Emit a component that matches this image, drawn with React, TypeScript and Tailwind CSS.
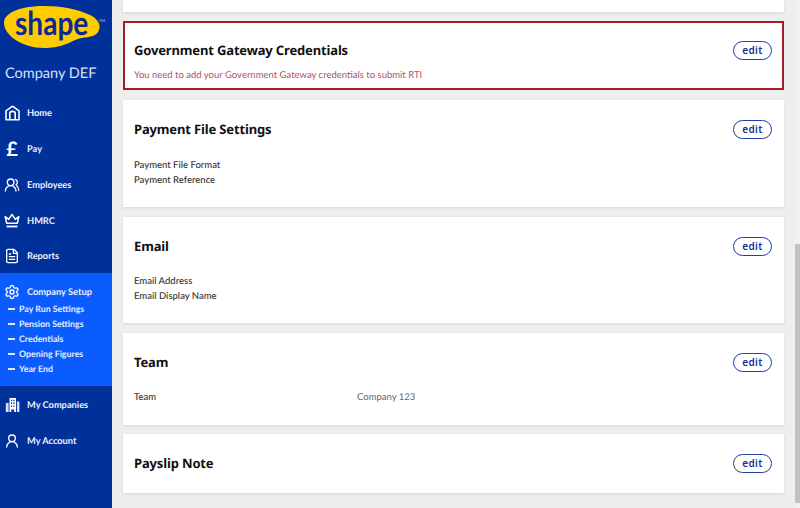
import { FileText, Settings, UserRound, UsersRound } from 'lucide-react'
import type { ReactNode } from 'react'

const heading = "font-['Noto_Sans',sans-serif] font-bold text-[13px] tracking-[-0.15px] text-[#111]"
const bodyText = 'text-[9.5px] leading-[15px]'

function Logo() {
  return (
    <svg width="106" height="50" viewBox="0 0 106 50" className="block">
      <path
        d="M4 23C4 12 22 6 44 6C62 6 77 9 90 15C98 19 101 25 99 30C97 36 90 37 82 38C73 39 66 48 44 48C22 48 4 35 4 23Z"
        fill="#ffcc00"
      />
      <text transform="translate(15 35) scale(0.85 1)" fontFamily="Lato, sans-serif" fontSize="33" fontWeight="700" fill="#0b2a94">
        shape
      </text>
      <text x="99" y="22" fontFamily="Lato, sans-serif" fontSize="4" fill="#c9d2f0">
        TM
      </text>
    </svg>
  )
}

function HomeIcon() {
  return (
    <svg width="15" height="16" viewBox="0 0 15 16" fill="none" stroke="white" strokeWidth="1.6">
      <path d="M1 14.7V5.8L7.5 1.2L14 5.8V14.7Z" strokeLinejoin="round" />
      <path d="M4.8 14.7V8.6C4.8 5.6 10.2 5.6 10.2 8.6V14.7" />
    </svg>
  )
}

function CrownIcon() {
  return (
    <svg width="16" height="15" viewBox="0 0 16 15" fill="none" stroke="white" strokeWidth="1.5" strokeLinejoin="round">
      <path d="M1.2 3.5L4.6 6.4L8 1.5L11.4 6.4L14.8 3.5L13.4 10.2H2.6Z" />
      <path d="M2.6 13.5H13.4" strokeWidth="1.8" />
    </svg>
  )
}

function BuildingsIcon() {
  return (
    <svg width="15" height="16" viewBox="0 0 15 16" fill="white">
      <path d="M4.5 1H11V15H9.2V12.5H6.3V15H4.5ZM6 2.8V4.2H7.2V2.8ZM8.3 2.8V4.2H9.5V2.8ZM6 5.6V7H7.2V5.6ZM8.3 5.6V7H9.5V5.6ZM6 8.4V9.8H7.2V8.4ZM8.3 8.4V9.8H9.5V8.4Z" fillRule="evenodd" />
      <path d="M0.8 6H3.6V15H0.8ZM11.9 4.5H14.4V15H11.9Z" opacity="0.85" />
    </svg>
  )
}

function NavItem({ icon, label }: { icon: ReactNode; label: string }) {
  return (
    <div className="flex h-[35.75px] items-center pl-[4px] pt-[3px]">
      <span className="flex w-4 justify-center">{icon}</span>
      <span className="ml-[7px] text-[9.25px] font-bold text-[#eef1fb]">{label}</span>
    </div>
  )
}

function SubItem({ label }: { label: string }) {
  return (
    <div className="flex h-[15px] items-center pl-2">
      <span className="h-[1.5px] w-[7px] bg-[#dfe6ff]" />
      <span className="ml-[4px] text-[8.8px] font-bold text-[#e6ebff]">{label}</span>
    </div>
  )
}

function EditButton() {
  return (
    <button className="flex h-[19px] w-[39px] items-center justify-center rounded-full border border-[#1c3ea8] bg-white font-['Noto_Sans',sans-serif] text-[10px] font-semibold tracking-[0.4px] text-[#142f8f]">
      edit
    </button>
  )
}

function Card({ title, children, className }: { title: string; children?: ReactNode; className: string }) {
  return (
    <section className={`bg-white pl-[11px] pr-[12px] shadow-[0_1px_3px_rgba(0,0,0,0.1)] ${className}`}>
      <div className="flex items-center justify-between">
        <h2 className={heading}>{title}</h2>
        <EditButton />
      </div>
      {children}
    </section>
  )
}

export default function App() {
  const iconProps = { size: 16, color: 'white', strokeWidth: 2 }

  return (
    <div className="flex h-[508px] w-[800px] overflow-hidden bg-[#eeeeee] font-['Lato',sans-serif] [text-rendering:geometricPrecision]">
      <aside className="w-[112px] shrink-0 bg-[#00309a]">
        <div className="h-[54px]">
          <Logo />
        </div>
        <p className="mt-[10px] pl-[5px] text-[14.5px] leading-5 text-[#dbe0f5]">Company DEF</p>
        <nav className="mt-[10px]">
          <NavItem icon={<HomeIcon />} label="Home" />
          <NavItem icon={<span className="text-[20px] font-bold leading-none text-white">£</span>} label="Pay" />
          <NavItem icon={<UsersRound {...iconProps} />} label="Employees" />
          <NavItem icon={<CrownIcon />} label="HMRC" />
          <NavItem icon={<FileText {...iconProps} />} label="Reports" />
          <div className="h-[113px] bg-[#0a5cff]">
            <NavItem icon={<Settings {...iconProps} />} label="Company Setup" />
            <div className="-mt-[7px]">
              <SubItem label="Pay Run Settings" />
              <SubItem label="Pension Settings" />
              <SubItem label="Credentials" />
              <SubItem label="Opening Figures" />
              <SubItem label="Year End" />
            </div>
          </div>
          <NavItem icon={<BuildingsIcon />} label="My Companies" />
          <NavItem icon={<UserRound {...iconProps} />} label="My Account" />
        </nav>
      </aside>

      <main className="flex w-[672px] shrink-0 flex-col pl-[11px]">
        <div className="h-3 bg-white shadow-[0_1px_3px_rgba(0,0,0,0.1)]" />

        <section className="mt-[9px] h-[69px] border-2 border-[#a51c24] bg-white pl-[9px] pr-[10px] pt-[18px]">
          <div className="flex items-center justify-between">
            <h2 className={heading}>Government Gateway Credentials</h2>
            <EditButton />
          </div>
          <p className="mt-[7px] text-[9.5px] leading-4 text-[#b0506a]">
            You need to add your Government Gateway credentials to submit RTI
          </p>
        </section>

        <Card title="Payment File Settings" className="mt-[10px] h-[107px] pt-5">
          <div className={`mt-[18px] font-medium text-[#333] ${bodyText}`}>
            <p>Payment File Format</p>
            <p>Payment Reference</p>
          </div>
        </Card>

        <Card title="Email" className="mt-[10px] h-[106px] pt-5">
          <div className={`mt-[17px] font-medium text-[#333] ${bodyText}`}>
            <p>Email Address</p>
            <p>Email Display Name</p>
          </div>
        </Card>

        <Card title="Team" className="mt-[10px] h-[92px] pt-5">
          <div className={`mt-[17px] flex ${bodyText}`}>
            <p className="w-[223px] font-medium text-[#333]">Team</p>
            <p className="text-[#666]">Company 123</p>
          </div>
        </Card>

        <Card title="Payslip Note" className="mt-[9px] h-[59px] pt-5" />
      </main>

      <div className="ml-[11px] flex w-[5px] flex-col bg-[#f1f1f1]">
        <div className="mt-[244px] h-[259px] bg-[#c1c1c1]" />
      </div>
    </div>
  )
}
